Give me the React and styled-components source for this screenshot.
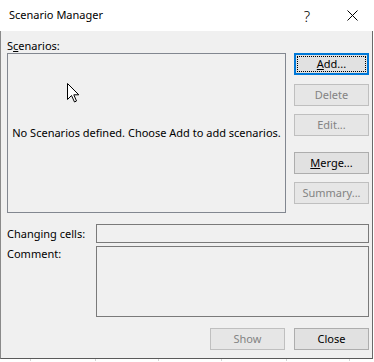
import styled, { createGlobalStyle } from "styled-components"

const GlobalStyle = createGlobalStyle`
  html, body {
    margin: 0;
    padding: 0;
    background: #ffffff;
  }
  body {
    width: 374px;
    height: 362px;
    overflow: hidden;
    font-family: "Segoe UI", "Noto Sans", "Open Sans", sans-serif;
    font-size: 11px;
    color: #000;
  }
`

const Dialog = styled.div`
  width: 373px;
  display: flex;
  flex-direction: column;
`

const TitleBar = styled.div`
  height: 31px;
  background: #ffffff;
  display: flex;
  align-items: center;
  padding-left: 9px;
  box-sizing: border-box;
`

const Title = styled.div`
  flex: 1;
  font-size: 11px;
  line-height: 16px;
  margin-top: -1px;
`

const TitleButton = styled.div`
  width: ${(p) => p.$w}px;
  height: 31px;
  display: flex;
  align-items: center;
  justify-content: center;
  font-size: 15px;
  font-weight: 300;
  color: #000;
`

const Body = styled.div`
  height: 328px;
  background: #f0f0f0;
  border-left: 1px solid #8a8a8a;
  border-right: 1px solid #6a6a6a;
  border-bottom: 1px solid #5a5a5a;
  box-sizing: border-box;
  padding: 7px 3px 8px 6px;
  display: flex;
  flex-direction: column;
`

const TopRow = styled.div`
  display: flex;
  gap: 8px;
`

const LeftColumn = styled.div`
  display: flex;
  flex-direction: column;
`

const Label = styled.div`
  line-height: 16px;
  height: 16px;
  white-space: nowrap;
`

const ListBox = styled.div`
  position: relative;
  width: 279px;
  height: 160px;
  box-sizing: border-box;
  border: 1px solid #828790;
  background: #f0f0f0;
  display: flex;
  align-items: center;
  justify-content: center;
  margin-top: -1px;
`

const EmptyText = styled.span`
  white-space: nowrap;
  margin-top: -1px;
`

const Cursor = styled.svg`
  position: absolute;
  left: 59px;
  top: 29px;
`

const ButtonColumn = styled.div`
  display: flex;
  flex-direction: column;
  padding-top: 15px;
`

const Button = styled.div`
  position: relative;
  width: 75px;
  height: 22px;
  box-sizing: border-box;
  margin-top: ${(p) => p.$mt || 0}px;
  background: ${(p) => (p.$disabled ? "#e6e6e6" : "#e1e1e1")};
  border: ${(p) =>
    p.$default ? "2px solid #0078d7" : p.$disabled ? "1px solid #bfbfbf" : "1px solid #adadad"};
  color: ${(p) => (p.$disabled ? "#838383" : "#000")};
  display: flex;
  align-items: center;
  justify-content: center;
  line-height: 16px;

  ${(p) =>
    p.$default &&
    `
    &::after {
      content: "";
      position: absolute;
      inset: 1px;
      border: 1px dotted #000;
    }
  `}
`

const FieldRow = styled.div`
  display: flex;
  margin-top: ${(p) => p.$mt}px;
`

const FieldLabel = styled.div`
  width: 89px;
  line-height: 16px;
  padding-top: ${(p) => p.$pt || 0}px;
  white-space: nowrap;
`

const Field = styled.div`
  width: 274px;
  height: ${(p) => p.$h}px;
  box-sizing: border-box;
  border: 1px solid #7a7a7a;
  background: #f0f0f0;
`

const Footer = styled.div`
  display: flex;
  justify-content: flex-end;
  gap: 9px;
  margin-top: 11px;
`

const GridStrip = styled.div`
  display: flex;
  height: 2px;
`

const GridCell = styled.div`
  width: ${(p) => p.$w}px;
  border-left: ${(p) => (p.$first ? "none" : "1px solid #d4d4d4")};
  box-sizing: border-box;
`

const App = () => {
  return (
    <>
      <GlobalStyle />
      <Dialog>
        <TitleBar>
          <Title>Scenario Manager</Title>
          <TitleButton $w={48}>?</TitleButton>
          <TitleButton $w={42}>
            <svg width="11" height="11" viewBox="0 0 11 11">
              <path d="M0.5 0.5 L10.5 10.5 M10.5 0.5 L0.5 10.5" stroke="#000" strokeWidth="1" fill="none" />
            </svg>
          </TitleButton>
        </TitleBar>
        <Body>
          <TopRow>
            <LeftColumn>
              <Label>
                S<u>c</u>enarios:
              </Label>
              <ListBox>
                <EmptyText>No Scenarios defined. Choose Add to add scenarios.</EmptyText>
                <Cursor width="13" height="20" viewBox="0 0 13 20">
                  <path
                    d="M0.5 0.5 L0.5 16.5 L4.5 12.5 L7.5 19 L9.5 18 L6.8 11.8 L11.8 11.8 Z"
                    fill="#fff"
                    stroke="#000"
                    strokeWidth="1"
                    strokeLinejoin="miter"
                  />
                </Cursor>
              </ListBox>
            </LeftColumn>
            <ButtonColumn>
              <Button $default>
                <span>
                  <u>A</u>dd...
                </span>
              </Button>
              <Button $disabled $mt={9}>Delete</Button>
              <Button $disabled $mt={8}>Edit...</Button>
              <Button $mt={16}>
                <span>
                  <u>M</u>erge...
                </span>
              </Button>
              <Button $disabled $mt={8}>Summary...</Button>
            </ButtonColumn>
          </TopRow>
          <FieldRow $mt={11}>
            <FieldLabel $pt={2}>Changing cells:</FieldLabel>
            <Field $h={19} />
          </FieldRow>
          <FieldRow $mt={3}>
            <FieldLabel $pt={0}>Comment:</FieldLabel>
            <Field $h={71} />
          </FieldRow>
          <Footer>
            <Button $disabled>Show</Button>
            <Button>Close</Button>
          </Footer>
        </Body>
        <GridStrip>
          <GridCell $first $w={30} />
          <GridCell $w={65} />
          <GridCell $w={63} />
          <GridCell $w={64} />
          <GridCell $w={65} />
          <GridCell $w={63} />
          <GridCell $w={24} />
        </GridStrip>
      </Dialog>
    </>
  )
}

export default App
